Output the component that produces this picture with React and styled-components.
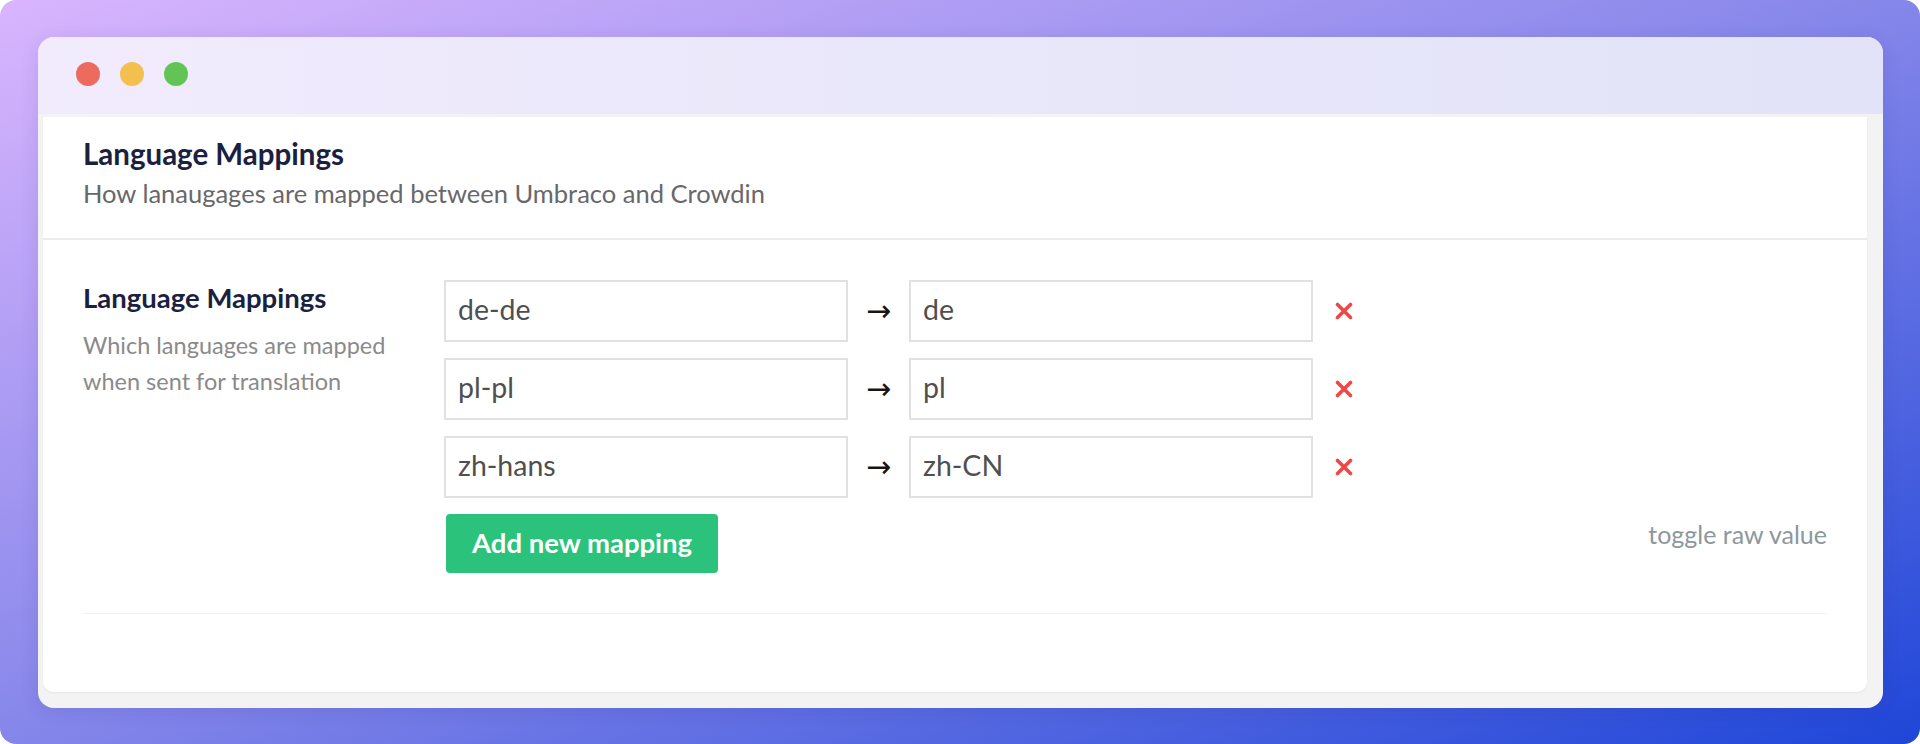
import React from "react";
import styled, { createGlobalStyle } from "styled-components";

const Global = createGlobalStyle`
  html, body { margin: 0; padding: 0; background: #ffffff; }
  body { font-family: Lato, "Open Sans", Arial, sans-serif; }
  * { box-sizing: border-box; }
`;

const Frame = styled.div`
  width: 1920px;
  height: 744px;
  border-radius: 16px;
  background: linear-gradient(to bottom right, #d9b5fe 0%, #8586ea 50%, #1f46d8 100%);
  padding: 37px 37px 36px 38px;
  display: flex;
`;

const Window = styled.div`
  flex: 1;
  display: flex;
  flex-direction: column;
  border-radius: 16px;
  overflow: hidden;
  background: #f3f3f4;
  box-shadow: 0 4px 18px rgba(40, 40, 120, 0.12);
`;

const TitleBar = styled.div`
  height: 77px;
  flex: none;
  display: flex;
  align-items: center;
  gap: 20px;
  padding: 0 0 4px 38px;
  background: linear-gradient(90deg, #f1ebfd 0%, #e9e7fa 50%, #e2e3f8 100%);
`;

const Dot = styled.span`
  width: 24px;
  height: 24px;
  border-radius: 50%;
  background: ${(p) => p.$color};
`;

const Body = styled.div`
  flex: 1;
  display: flex;
  padding: 3px 16px 16px 5px;
`;

const Panel = styled.div`
  flex: 1;
  background: #ffffff;
  border-radius: 0 0 10px 10px;
  box-shadow: 0 1px 2px rgba(0, 0, 0, 0.06);
  display: flex;
  flex-direction: column;
`;

const Header = styled.div`
  padding: 20px 40px 30px 40px;
  border-bottom: 2px solid #ececec;
`;

const Title = styled.h1`
  margin: 0;
  font-family: Lato, sans-serif;
  font-weight: 700;
  font-size: 29.5px;
  line-height: 34px;
  color: #1a2140;
`;

const Subtitle = styled.p`
  margin: 7px 0 0 0;
  font-family: Lato, sans-serif;
  font-size: 25.5px;
  line-height: 30px;
  color: #68676b;
`;

const Section = styled.div`
  padding: 40px 40px 0 40px;
`;

const Property = styled.div`
  display: flex;
  padding-bottom: 40px;
  border-bottom: 1px solid #f1f1f1;
`;

const LabelCol = styled.div`
  width: 361px;
  flex: none;
`;

const Label = styled.div`
  font-family: Lato, sans-serif;
  font-weight: 700;
  font-size: 27.5px;
  line-height: 36px;
  color: #1a2140;
`;

const Description = styled.div`
  margin-top: 11px;
  width: 325px;
  font-family: Lato, sans-serif;
  font-size: 23.5px;
  line-height: 36px;
  color: #8a8a8a;
`;

const Editor = styled.div`
  flex: 1;
  display: flex;
  flex-direction: column;
  gap: 16px;
`;

const MapRow = styled.div`
  display: flex;
  align-items: center;
`;

const Input = styled.input`
  width: 404px;
  height: 62px;
  padding: 0 0 4px 12px;
  border: 2px solid #e1e1e1;
  border-radius: 0;
  background: #fff;
  font-family: Lato, sans-serif;
  font-size: 28.5px;
  color: #4f4f4f;
  outline: none;
`;

const Arrow = styled.span`
  width: 61px;
  text-align: center;
  font-family: "DejaVu Sans", sans-serif;
  font-size: 30px;
  line-height: 30px;
  color: #161616;
`;

const Remove = styled.button`
  margin-left: 22px;
  width: 18px;
  height: 18px;
  padding: 0;
  border: none;
  background: none;
  display: flex;
  cursor: pointer;
`;

const Actions = styled.div`
  display: flex;
  align-items: flex-start;
  justify-content: space-between;
`;

const AddButton = styled.button`
  margin-left: 2px;
  height: 59px;
  padding: 0 26px 2px 26px;
  border: none;
  border-radius: 4px;
  background: #2bc37c;
  color: #ffffff;
  font-family: Lato, sans-serif;
  font-weight: 700;
  font-size: 27.5px;
  cursor: pointer;
`;

const Toggle = styled.span`
  font-family: Lato, sans-serif;
  font-size: 25px;
  line-height: 40px;
  color: #8d979e;
`;

const mappings = [
  ["de-de", "de"],
  ["pl-pl", "pl"],
  ["zh-hans", "zh-CN"],
];

const Cross = () => (
  <svg width="18" height="18" viewBox="0 0 18 18">
    <path d="M2.5 2.5 L15.5 15.5 M15.5 2.5 L2.5 15.5" stroke="#ef4747" strokeWidth="3.6" strokeLinecap="round" />
  </svg>
);

export default function App() {
  return (
    <>
      <Global />
      <Frame>
        <Window>
          <TitleBar>
            <Dot $color="#ec6a5e" />
            <Dot $color="#f3bf4f" />
            <Dot $color="#61c454" />
          </TitleBar>
          <Body>
            <Panel>
              <Header>
                <Title>Language Mappings</Title>
                <Subtitle>How lanaugages are mapped between Umbraco and Crowdin</Subtitle>
              </Header>
              <Section>
                <Property>
                  <LabelCol>
                    <Label>Language Mappings</Label>
                    <Description>Which languages are mapped when sent for translation</Description>
                  </LabelCol>
                  <Editor>
                    {mappings.map(([from, to]) => (
                      <MapRow key={from}>
                        <Input defaultValue={from} />
                        <Arrow>→</Arrow>
                        <Input defaultValue={to} />
                        <Remove aria-label="Remove">
                          <Cross />
                        </Remove>
                      </MapRow>
                    ))}
                    <Actions>
                      <AddButton>Add new mapping</AddButton>
                      <Toggle>toggle raw value</Toggle>
                    </Actions>
                  </Editor>
                </Property>
              </Section>
            </Panel>
          </Body>
        </Window>
      </Frame>
    </>
  );
}
